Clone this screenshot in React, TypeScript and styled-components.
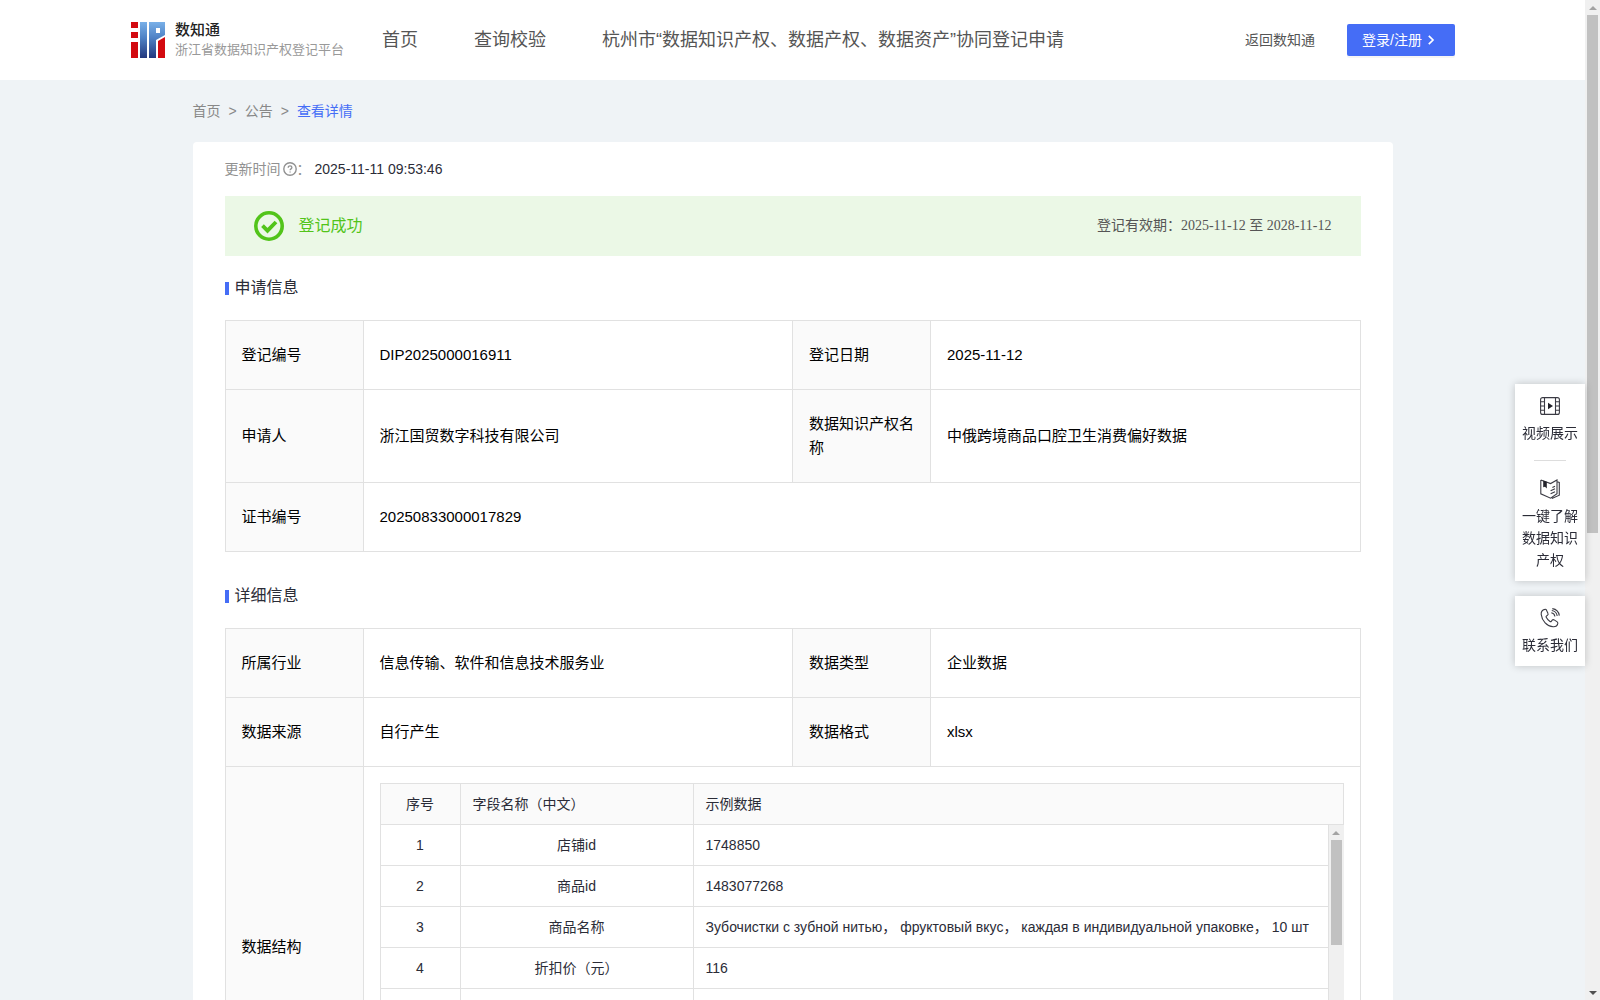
import React from "react";
import styled, { createGlobalStyle } from "styled-components";

const GlobalStyle = createGlobalStyle`
  * { box-sizing: border-box; }
  body {
    margin: 0;
    background: #eff3f6;
    color: #2b2c37;
    font: 14px/22px "Liberation Sans", Arial, "Noto Sans CJK SC", sans-serif;
  }
  a { color: inherit; text-decoration: none; }
  table { border-collapse: collapse; table-layout: fixed; width: 100%; }
`;

const Shell = styled.div`
  display: flex;
  height: 100vh;
`;

const Viewport = styled.div`
  flex: 1;
  min-width: 0;
  overflow-y: auto;
  scrollbar-width: none;
`;

const Track = styled.div`
  display: flex;
  flex-direction: column;
  flex: none;
  width: 15px;
  background: #f0f0f0;
`;

const TrackArrow = styled.span<{ $down?: boolean }>`
  display: grid;
  place-items: center;
  height: 15px;

  &::before {
    content: "";
    border: 4px solid transparent;
    border-width: ${(p) => (p.$down ? "4px 4px 0" : "0 4px 4px")};
    border-top-color: ${(p) => (p.$down ? "#505050" : "transparent")};
    border-bottom-color: ${(p) => (p.$down ? "transparent" : "#a3a3a3")};
  }
`;

const TrackRail = styled.div`
  flex: 1;
  padding: 0 2px;
`;

const Thumb = styled.div<{ $share: number }>`
  height: ${(p) => p.$share}%;
  background: #c1c1c1;
`;

const Header = styled.header`
  display: flex;
  align-items: center;
  height: 80px;
  padding: 0 130px 0 131px;
  background: #fff;
  color: #555;
`;

const Brand = styled.a`
  display: flex;
  align-items: center;
  gap: 9px;
  width: 251px;
  white-space: nowrap;
`;

const BrandText = styled.span`
  display: flex;
  flex-direction: column;
  line-height: 20px;
`;

const BrandName = styled.strong`
  color: #222;
  font-size: 15px;
  font-weight: 500;
`;

const BrandSub = styled.span`
  color: #999;
  font-size: 13px;
`;

const Nav = styled.nav`
  display: flex;
  flex: 1;
  gap: 56px;
  font-size: 18px;
  line-height: 24px;
  white-space: nowrap;
`;

const Actions = styled.div`
  display: flex;
  align-items: center;
  gap: 32px;
  white-space: nowrap;
`;

const LoginButton = styled.button`
  display: flex;
  align-items: center;
  gap: 2px;
  height: 32px;
  padding: 0 16px 0 15px;
  border: 0;
  border-radius: 2px;
  background: #456df6;
  box-shadow: 0 2px 0 rgba(0, 0, 0, 0.04);
  color: #fff;
  font: inherit;
  cursor: pointer;
`;

const Page = styled.div`
  max-width: 1200px;
  margin: 0 auto;
`;

const Crumbs = styled.nav`
  display: flex;
  align-items: center;
  gap: 8px;
  height: 62px;
  color: #888;
`;

const CurrentCrumb = styled.a`
  color: #456df6;
`;

const Card = styled.main`
  padding: 16px 32px 32px;
  border-radius: 4px;
  background: #fff;
`;

const Updated = styled.div`
  display: flex;
  align-items: center;
  gap: 4px;
  margin-bottom: 16px;
`;

const UpdatedLabel = styled.span`
  display: flex;
  align-items: center;
  color: #919191;

  svg { margin-left: 2px; }
`;

const Banner = styled.div`
  display: flex;
  align-items: center;
  justify-content: space-between;
  height: 60px;
  padding: 0 29px;
  background: #ebf8e6;
`;

const BannerStatus = styled.div`
  display: flex;
  align-items: center;
  gap: 15px;
  color: #52c41a;
  font-size: 16px;
`;

const BannerTerm = styled.div`
  color: #555;
  font-family: "Liberation Serif", "Noto Sans CJK SC", serif;
`;

const SectionTitle = styled.h2`
  display: flex;
  align-items: center;
  gap: 6px;
  margin: 20px 0;
  font-size: 16px;
  font-weight: 400;
  line-height: 24px;

  &::before {
    content: "";
    width: 4px;
    height: 13px;
    background: #456df6;
  }
`;

const InfoTable = styled.table`
  margin-bottom: 32px;
  color: #000;
  font-size: 15px;
  line-height: 24px;

  th, td {
    padding: 22px 16px;
    border: 1px solid #e1e1e1;
    font-weight: 400;
    text-align: left;
  }

  th {
    padding-right: 12px;
    background: #fafafa;
  }
`;

const LabelCol = styled.col`
  width: 138px;
`;

const NestedCell = styled.td`
  && { padding: 16px; }
`;

const FieldTable = styled.table`
  color: #2b2c37;
  font-size: 14px;
  line-height: 22px;

  && th, && td {
    height: 41px;
    padding: 9px 12px;
  }

  && tbody tr:first-child td {
    height: 40px;
    padding: 8px 12px;
    border-top: 0;
  }

  && .center { text-align: center; }
`;

const IndexCol = styled.col`
  width: 80px;
`;

const NameCol = styled.col`
  width: 233px;
`;

const FieldBody = styled.div`
  display: flex;
  height: 286px;
`;

const FieldRows = styled.div`
  flex: 1;
  min-width: 0;
  overflow-y: auto;
  scrollbar-width: none;
`;

const Dock = styled.aside`
  position: fixed;
  top: 384px;
  right: 15px;
  display: flex;
  flex-direction: column;
  gap: 15px;
  width: 70px;
`;

const DockBox = styled.div`
  padding: 12px 6px 10px;
  background: #fff;
  box-shadow: 0 0 8px rgba(0, 0, 0, 0.2);
`;

const DockLink = styled.a`
  display: flex;
  flex-direction: column;
  align-items: center;
  gap: 6px;
  text-align: center;
`;

const DockDivider = styled.hr`
  width: 32px;
  margin: 16px auto 18px;
  border: 0;
  border-top: 1px solid #ddd;
`;

const Logo = () => (
  <svg width="35" height="36" viewBox="0 0 35 36" aria-hidden="true">
    <defs>
      <linearGradient id="blue" x1="0" y1="0" x2="0" y2="36" gradientUnits="userSpaceOnUse">
        <stop offset="0" stopColor="#79b0e8" />
        <stop offset="0.45" stopColor="#4d80c4" />
        <stop offset="1" stopColor="#23387e" />
      </linearGradient>
    </defs>
    <path fill="#d30a10" d="M0 0h7v6H0zM0 10h7v6H0zM0 20h7v16H0zM27 19l7-4v21h-7z" />
    <path fill="url(#blue)" d="M9 0h7v36H9z" />
    <path fill="url(#blue)" fillRule="evenodd" d="M18 0h16v13l-9 5v18h-7zM25 6v5h4V6z" />
  </svg>
);

const HelpIcon = () => (
  <svg width="14" height="14" viewBox="0 0 14 14" fill="none" stroke="currentColor" aria-hidden="true">
    <circle cx="7" cy="7" r="6.2" strokeWidth="1.4" />
    <path d="M5.2 5.7c0-2.4 3.7-2.3 3.7-.1 0 1.3-1.8 1.3-1.8 2.7M7.1 9.4v1.2" strokeWidth="1.3" />
  </svg>
);

const SuccessIcon = () => (
  <svg width="30" height="30" viewBox="0 0 30 30" fill="none" stroke="#52c41a" aria-hidden="true">
    <circle cx="15" cy="15" r="13.2" strokeWidth="3.6" />
    <path d="M8.5 14.7l5 5 8.5-8.7" strokeWidth="3.8" />
  </svg>
);

const ArrowIcon = () => (
  <svg width="15" height="14" viewBox="0 0 15 14" fill="none" stroke="currentColor" strokeWidth="1.7" aria-hidden="true">
    <path d="M4.800 2.800L9 7l-4.200 4.200" />
  </svg>
);

const VideoIcon = () => (
  <svg width="20" height="20" viewBox="0 0 20 20" fill="none" stroke="#3b3b44" strokeWidth="1.1" aria-hidden="true">
    <rect x="0.6" y="1.6" width="18.8" height="16.8" rx="2" />
    <path d="M4.5 1.6v16.8M15.5 1.6v16.8M.6 5.8h3.9M.6 10h3.9M.6 14.2h3.9M15.5 5.8h3.9M15.5 10h3.9M15.5 14.2h3.9" />
    <path d="M8 6.8v6.4l5-3.2z" fill="#22222a" stroke="none" />
  </svg>
);

const BookIcon = () => (
  <svg width="20" height="20" viewBox="0 0 20 20" fill="none" stroke="#3b3b44" strokeWidth="1.1" aria-hidden="true">
    <path d="M.8 1v13.800l9.800 4.400 6.400-4.400V1l-6.400 3.600L.8 1M17 2.800l2.300.6v12.800l-7.400 3.200M12.400 8.600l2.600-1.400M10.600 11.800l4.400-2M10.600 14.800l4.400-2" />
    <path d="M3.200 1.400L6.800 2.800v6.800L5 7.800l-1.800.4z" fill="#22222a" stroke="none" />
  </svg>
);

const PhoneIcon = () => (
  <svg width="20" height="20" viewBox="0 0 20 20" fill="none" stroke="#3b3b44" strokeWidth="1.1" aria-hidden="true">
    <path d="M4.800 1.400C2.400 2 1 3.900 1.200 6.400c.6 6.300 5.900 12 12 12.400 2.200.1 4.200-1.300 4.600-3.400.1-.7-.1-1.100-.6-1.500l-3-2c-.7-.4-1.500-.3-2 .3l-.9 1.100c-.4.5-.8.5-1.300.2-1.700-1.100-2.900-2.500-3.800-4.200-.3-.5-.2-1 .3-1.300l1.100-.9c.6-.5.7-1.200.3-1.900L6.400 1.900c-.4-.6-.9-.7-1.600-.5z" />
    <path d="M11.300 4.800c2 .3 3.300 1.700 3.600 3.700M11.800 2.500c3 .5 5 2.500 5.400 5.500M12.300.6c3.900.6 6.500 3.100 7 7" />
  </svg>
);

const fields: [string, string][] = [
  ["店铺id", "1748850"],
  ["商品id", "1483077268"],
  ["商品名称", "Зубочистки с зубной нитью， фруктовый вкус， каждая в индивидуальной упаковке， 10 шт"],
  ["折扣价（元）", "116"],
];

const Scrollbar = ({ share }: { share: number }) => (
  <Track aria-hidden="true">
    <TrackArrow />
    <TrackRail>
      <Thumb $share={share} />
    </TrackRail>
    <TrackArrow $down />
  </Track>
);

const FieldCols = () => (
  <colgroup>
    <IndexCol />
    <NameCol />
    <col />
  </colgroup>
);

const InfoCols = () => (
  <colgroup>
    <LabelCol />
    <col />
    <LabelCol />
    <col />
  </colgroup>
);

export default function App() {
  return (
    <Shell>
      <GlobalStyle />
      <Viewport>
        <Header>
          <Brand href="#">
            <Logo />
            <BrandText>
              <BrandName>数知通</BrandName>
              <BrandSub>浙江省数据知识产权登记平台</BrandSub>
            </BrandText>
          </Brand>
          <Nav>
            <a href="#">首页</a>
            <a href="#">查询校验</a>
            <a href="#">杭州市“数据知识产权、数据产权、数据资产”协同登记申请</a>
          </Nav>
          <Actions>
            <a href="#">返回数知通</a>
            <LoginButton type="button">
              登录/注册
              <ArrowIcon />
            </LoginButton>
          </Actions>
        </Header>

        <Page>
          <Crumbs>
            <a href="#">首页</a>
            <span>&gt;</span>
            <a href="#">公告</a>
            <span>&gt;</span>
            <CurrentCrumb href="#">查看详情</CurrentCrumb>
          </Crumbs>

          <Card>
            <Updated>
              <UpdatedLabel>
                更新时间
                <HelpIcon />
                <span>：</span>
              </UpdatedLabel>
              <span>2025-11-11 09:53:46</span>
            </Updated>

            <Banner>
              <BannerStatus>
                <SuccessIcon />
                登记成功
              </BannerStatus>
              <BannerTerm>登记有效期：2025-11-12 至 2028-11-12</BannerTerm>
            </Banner>

            <SectionTitle>申请信息</SectionTitle>
            <InfoTable>
              <InfoCols />
              <tbody>
                <tr>
                  <th scope="row">登记编号</th>
                  <td>DIP2025000016911</td>
                  <th scope="row">登记日期</th>
                  <td>2025-11-12</td>
                </tr>
                <tr>
                  <th scope="row">申请人</th>
                  <td>浙江国贸数字科技有限公司</td>
                  <th scope="row">数据知识产权名称</th>
                  <td>中俄跨境商品口腔卫生消费偏好数据</td>
                </tr>
                <tr>
                  <th scope="row">证书编号</th>
                  <td colSpan={3}>20250833000017829</td>
                </tr>
              </tbody>
            </InfoTable>

            <SectionTitle>详细信息</SectionTitle>
            <InfoTable>
              <InfoCols />
              <tbody>
                <tr>
                  <th scope="row">所属行业</th>
                  <td>信息传输、软件和信息技术服务业</td>
                  <th scope="row">数据类型</th>
                  <td>企业数据</td>
                </tr>
                <tr>
                  <th scope="row">数据来源</th>
                  <td>自行产生</td>
                  <th scope="row">数据格式</th>
                  <td>xlsx</td>
                </tr>
                <tr>
                  <th scope="row">数据结构</th>
                  <NestedCell colSpan={3}>
                    <FieldTable>
                      <FieldCols />
                      <thead>
                        <tr>
                          <th scope="col" className="center">序号</th>
                          <th scope="col">字段名称（中文）</th>
                          <th scope="col">示例数据</th>
                        </tr>
                      </thead>
                    </FieldTable>
                    <FieldBody>
                      <FieldRows>
                        <FieldTable>
                          <FieldCols />
                          <tbody>
                            {fields.map(([name, sample], i) => (
                              <tr key={name}>
                                <td className="center">{i + 1}</td>
                                <td className="center">{name}</td>
                                <td>{sample}</td>
                              </tr>
                            ))}
                            <tr>
                              <td />
                              <td />
                              <td />
                            </tr>
                          </tbody>
                        </FieldTable>
                      </FieldRows>
                      <Scrollbar share={41} />
                    </FieldBody>
                  </NestedCell>
                </tr>
              </tbody>
            </InfoTable>
          </Card>
        </Page>
      </Viewport>
      <Scrollbar share={53.4} />

      <Dock>
        <DockBox>
          <DockLink href="#">
            <VideoIcon />
            视频展示
          </DockLink>
          <DockDivider />
          <DockLink href="#">
            <BookIcon />
            一键了解数据知识产权
          </DockLink>
        </DockBox>
        <DockBox>
          <DockLink href="#">
            <PhoneIcon />
            联系我们
          </DockLink>
        </DockBox>
      </Dock>
    </Shell>
  );
}
